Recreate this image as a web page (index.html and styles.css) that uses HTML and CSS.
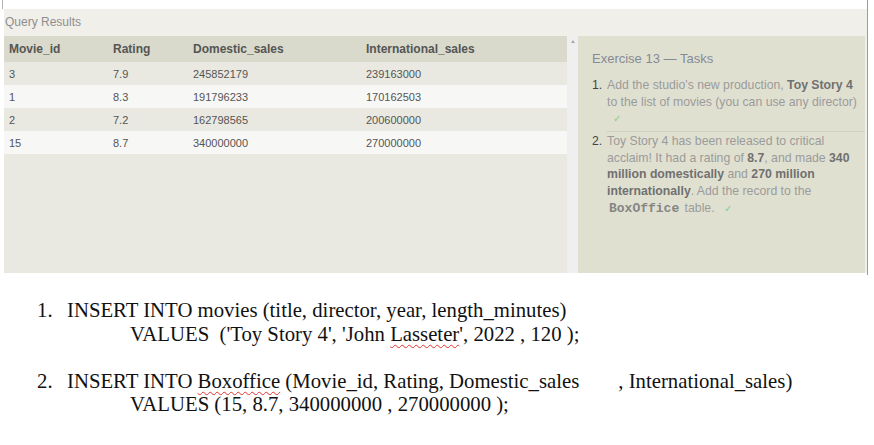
FILE: index.html
```html
<!DOCTYPE html>
<html lang="en">
<head>
<meta charset="utf-8">
<title>SQL exercise 13</title>
<link rel="stylesheet" href="styles.css">
</head>
<body>
<div class="shot">
  <div class="cap"></div>
  <div class="panel">
    <div class="qtitle">Query Results</div>
    <div class="main">
      <div class="results">
        <div class="row head">
          <div>Movie_id</div><div>Rating</div><div>Domestic_sales</div><div>International_sales</div>
        </div>
        <div class="row odd first">
          <div>3</div><div>7.9</div><div>245852179</div><div>239163000</div>
        </div>
        <div class="row even">
          <div>1</div><div>8.3</div><div>191796233</div><div>170162503</div>
        </div>
        <div class="row odd">
          <div>2</div><div>7.2</div><div>162798565</div><div>200600000</div>
        </div>
        <div class="row even">
          <div>15</div><div>8.7</div><div>340000000</div><div>270000000</div>
        </div>
      </div>
      <div class="scroll"><span class="arrow"></span></div>
      <aside class="tasks">
        <h3 class="ex-title">Exercise 13 — Tasks</h3>
        <ol class="task-list">
          <li class="task">
            <span class="num">1.</span>
            <span class="tx">Add the studio's new production, <b>Toy Story 4</b> to the list of movies (you can use any director)<br><span class="check">✓</span></span>
          </li>
          <li class="task second">
            <span class="num">2.</span>
            <span class="tx">Toy Story 4 has been released to critical acclaim! It had a rating of <b>8.7</b>, and made <b>340 million domestically</b> and <b>270 million internationally</b>. Add the record to the <code>BoxOffice</code> table. <span class="check">✓</span></span>
          </li>
        </ol>
      </aside>
    </div>
  </div>
</div>

<ol class="doc">
  <li class="item">
    <span class="inum">1.</span>
    <div class="itext">
      <div class="line">INSERT INTO movies (title, director, year, length_minutes)</div>
      <div class="line indent">VALUES&nbsp; ('Toy Story 4', 'John <span class="spell">Lasseter</span>', 2022 , 120 );</div>
    </div>
  </li>
  <li class="item gapped">
    <span class="inum">2.</span>
    <div class="itext">
      <div class="line">INSERT INTO <span class="spell">Boxoffice</span> (Movie_id, Rating, Domestic_sales<span class="wide"></span>, International_sales)</div>
      <div class="line indent">VALUES (15, 8.7, 340000000 , 270000000 );</div>
    </div>
  </li>
</ol>
</body>
</html>
```

FILE: styles.css
```css
* { box-sizing: border-box; }

body {
  margin: 0;
  background: #ffffff;
  font-family: "Liberation Sans", Arial, sans-serif;
}

.shot {
  width: 868px;
  height: 275px;
  border-right: 1px solid #9c9c9c;
  display: flex;
  flex-direction: column;
}

.cap {
  height: 9px;
  margin-left: 2px;
  border-left: 1px solid #b4b4b4;
}

.panel {
  margin-left: 4px;
  height: 264px;
  background: #f0efe9;
  display: flex;
  flex-direction: column;
}

.qtitle {
  height: 27px;
  padding: 6px 0 0 1px;
  font-size: 12px;
  line-height: 14px;
  color: #8e8e8e;
}

.main {
  height: 237px;
  display: flex;
}

.results {
  width: 563px;
  background: #e9e9e1;
  color: #555555;
}

.row {
  display: grid;
  grid-template-columns: 104px 80px 173px 206px;
  align-items: center;
  height: 23px;
  font-size: 11px;
}

.row > div { padding-left: 5px; }

.row.head {
  height: 26px;
  background: #d9dacb;
  font-size: 12px;
  font-weight: bold;
}

.row.odd { background: #e9e9e1; }
.row.even { background: #f7f7f5; }

.scroll {
  width: 11px;
  background: #efefef;
  display: flex;
  justify-content: center;
  padding-top: 4px;
}

.arrow {
  width: 0;
  height: 0;
  border-left: 2.5px solid transparent;
  border-right: 2.5px solid transparent;
  border-bottom: 3px solid #a8a8a8;
}

.tasks {
  width: 287px;
  background: #e0e0d1;
  padding: 15px 0 0 14px;
}

.ex-title {
  margin: 0;
  font-size: 13px;
  line-height: 16px;
  font-weight: normal;
  color: #858a96;
}

.task-list {
  list-style: none;
  margin: 10px 0 0;
  padding: 0;
  font-size: 12.25px;
  line-height: 16.6px;
  color: #9b9b9b;
}

.task {
  display: flex;
  align-items: baseline;
}

.task + .task { margin-top: 3px; }

.num {
  width: 14px;
  flex: none;
  color: #444444;
}

.tx {
  flex: 1;
  padding: 0 3px 0 1px;
}

.second .tx {
  border-top: 1px solid #d3d3c3;
  padding-top: 1px;
  line-height: 16.8px;
}

.tx b {
  color: #707070;
  font-weight: bold;
}

.tx code {
  font-family: "Liberation Mono", "DejaVu Sans Mono", monospace;
  font-weight: bold;
  font-size: 13px;
  color: #858585;
  padding: 0 2px;
}

.check {
  display: inline-block;
  margin-left: 6px;
  font-size: 10px;
  color: #86cf86;
}

.doc {
  list-style: none;
  margin: 24px 0 0;
  padding: 0 0 0 37px;
  font-family: "Liberation Serif", "Times New Roman", serif;
  font-size: 20.75px;
  line-height: 23.5px;
  color: #111111;
}

.item {
  display: flex;
}

.item.gapped { margin-top: 23.5px; }

.inum {
  width: 30px;
  flex: none;
}

.indent { padding-left: 63px; }

.spell {
  text-decoration: underline wavy #e03030;
  text-decoration-thickness: 1px;
  text-underline-offset: 3px;
}

.wide {
  display: inline-block;
  width: 39px;
}
```
